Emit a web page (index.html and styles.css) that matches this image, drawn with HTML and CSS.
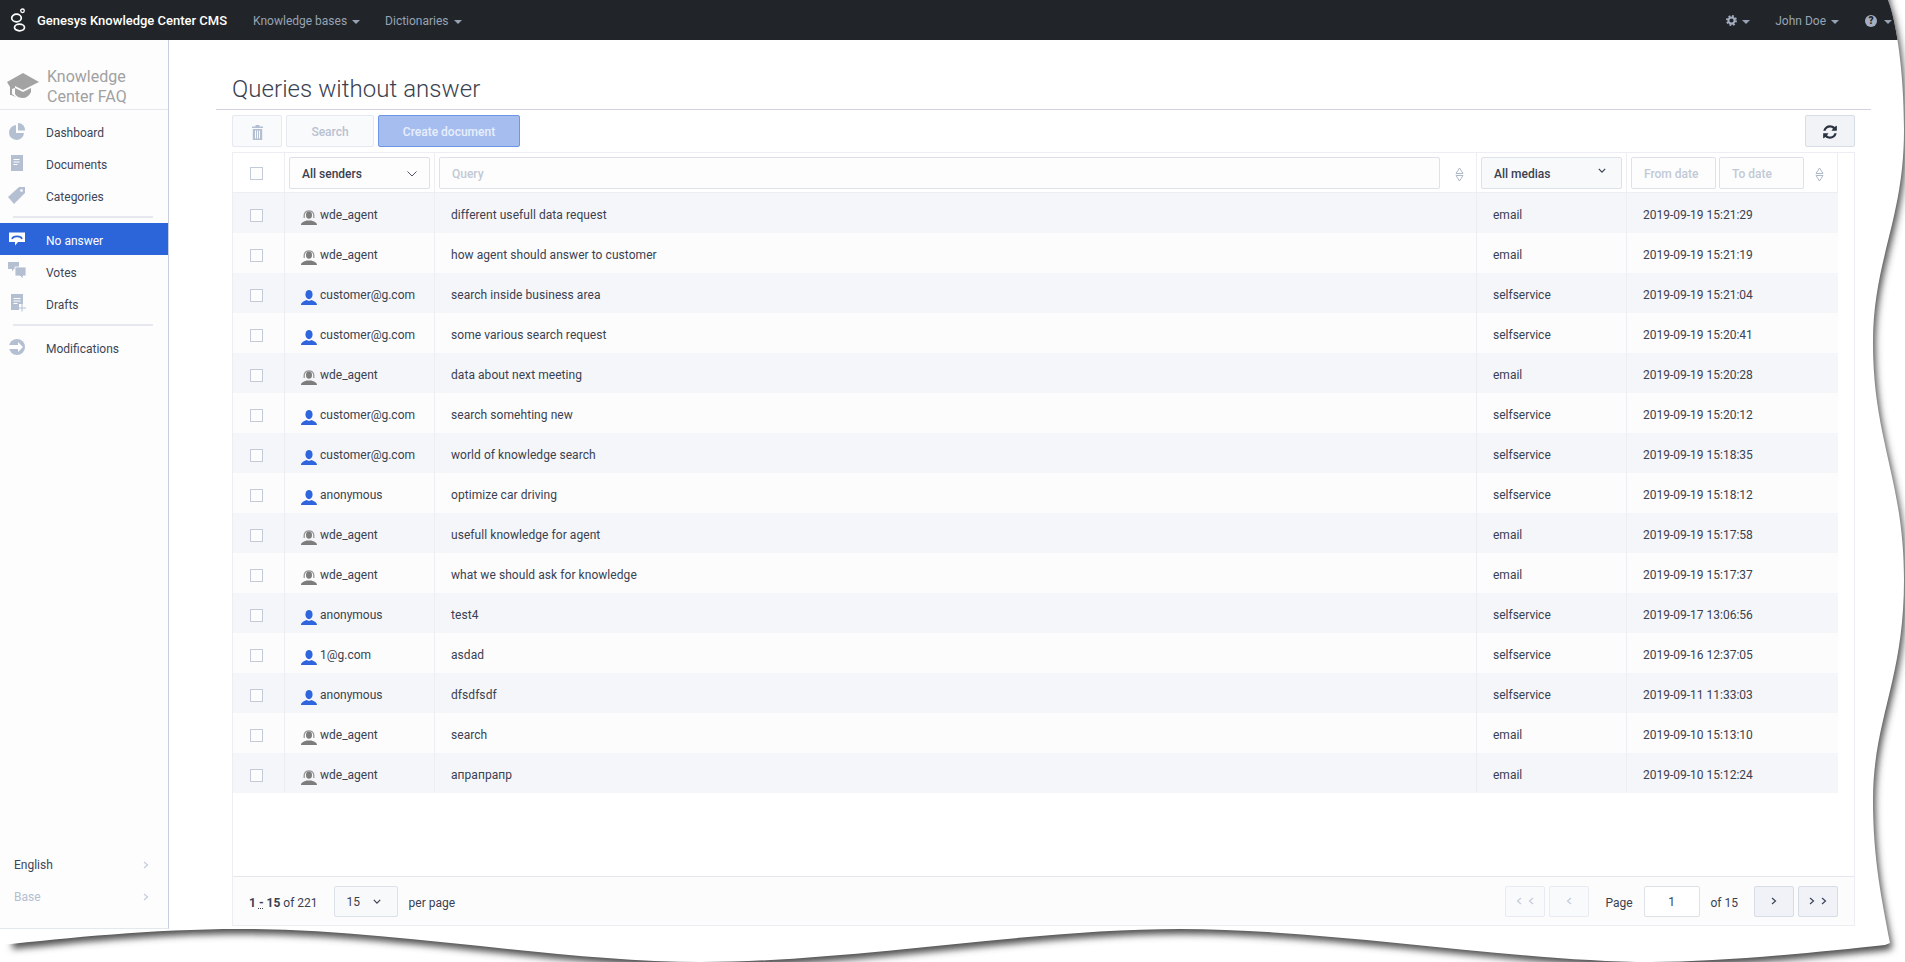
FILE: index.html
```html
<!DOCTYPE html>
<html lang="en">
<head>
  <meta charset="UTF-8">
  <title>Genesys Knowledge Center CMS</title>
  <link rel="stylesheet" href="styles.css">
</head>
<body>
  <!-- shared icons -->
  <svg class="sprite" width="0" height="0">
    <defs>
      <symbol id="i-customer" viewBox="0 0 16 15">
        <ellipse cx="8" cy="4.6" rx="3.6" ry="4.6" fill="#2f65dd"/>
        <path d="M0 15c0-2.600 2.500-3.600 5.500-5l2.500 1 2.500-1c3 1.400 5.500 2.400 5.500 5z" fill="#2f65dd"/>
      </symbol>
      <symbol id="i-agent" viewBox="0 0 16 15">
        <ellipse cx="8" cy="5" rx="3" ry="3.800" fill="#7d7d7d"/>
        <path d="M3.200 8V5.500C3.200 2.600 5.300 .8 8 .8s4.800 1.800 4.800 4.700V8" fill="none" stroke="#9a9a9a" stroke-width="1.300"/>
        <path d="M0 15c0-2.400 2.800-3.200 5.500-4.400h5c2.700 1.200 5.500 2 5.500 4.400z" fill="#7d7d7d"/>
      </symbol>
      <symbol id="i-sort" viewBox="0 0 9 15">
        <path d="M4.500 1L8 6.500H1zM1 8.500h7L4.500 14z" fill="none" stroke="#aeb7c6"/>
      </symbol>
      <symbol id="i-chev-right" viewBox="0 0 6 8">
        <path d="M1 1l3.500 3L1 7" fill="none" stroke="currentColor" stroke-width="1.200"/>
      </symbol>
      <symbol id="i-chev-left" viewBox="0 0 6 8">
        <path d="M5 1L1.500 4 5 7" fill="none" stroke="currentColor" stroke-width="1.200"/>
      </symbol>
      <symbol id="i-chev-down" viewBox="0 0 10 6">
        <path d="M1 1l4 4 4-4" fill="none" stroke="currentColor" stroke-width="1.500"/>
      </symbol>
      <symbol id="i-chev-thin" viewBox="0 0 10 6">
        <path d="M.5 .5L5 5l4.500-4.500" fill="none" stroke="currentColor" stroke-width=".9"/>
      </symbol>
      <path id="page-shape" d="M0 -20H1885L1888 0C1896 20 1904 70 1904 130C1904 220 1873 260 1873 343C1873 440 1904 480 1904 580C1904 680 1873 720 1873 800C1873 860 1882 900 1890 943L1885 945C1820 952 1720 962 1651 962C1520 962 1330 929 1180 929C1030 929 850 962 701 962C560 962 390 929 240 929C150 929 70 938 0 945Z"/>
      <path id="shadow-shape" d="M10 -20H1885L1888 0C1896 20 1904 70 1904 130C1904 220 1873 260 1873 343C1873 440 1904 480 1904 580C1904 680 1873 720 1873 800C1873 860 1882 900 1890 943L1885 945C1820 952 1720 962 1651 962C1520 962 1330 929 1180 929C1030 929 850 962 701 962C560 962 390 929 240 929C150 929 70 938 10 944Z"/>
      <filter id="tear-blur" filterUnits="userSpaceOnUse" x="0" y="-40" width="1960" height="1060">
        <feGaussianBlur stdDeviation="3.600"/>
      </filter>
      <mask id="outside-page" maskUnits="userSpaceOnUse" x="0" y="0" width="1905" height="962">
        <rect width="1905" height="962" fill="#fff"/>
        <use href="#page-shape" fill="#000"/>
      </mask>
    </defs>
  </svg>

  <header class="navbar">
    <svg class="logo" width="17" height="25" viewBox="0 0 17 25">
      <circle cx="12.500" cy="2.800" r="1.800" fill="none" stroke="#fff" stroke-width="1.300"/>
      <ellipse cx="6.500" cy="10" rx="4.800" ry="3.800" fill="none" stroke="#fff" stroke-width="1.700"/>
      <ellipse cx="9.500" cy="19.500" rx="5" ry="3.300" fill="none" stroke="#fff" stroke-width="1.700"/>
    </svg>
    <span class="brand">Genesys Knowledge Center CMS</span>
    <a class="nav-link">Knowledge bases<i class="caret"></i></a>
    <a class="nav-link">Dictionaries<i class="caret"></i></a>
    <div class="nav-right">
      <a class="nav-link">
        <svg class="gear" width="11" height="11" viewBox="0 0 12 12">
          <circle cx="6" cy="6" r="3.400" fill="none" stroke="#a3afc0" stroke-width="2.200"/>
          <circle cx="6" cy="6" r="5" fill="none" stroke="#a3afc0" stroke-width="2" stroke-dasharray="2 1.930"/>
        </svg><i class="caret"></i>
      </a>
      <a class="nav-link user-link">John Doe<i class="caret"></i></a>
      <a class="nav-link help-link"><span class="help">?</span><i class="caret"></i></a>
    </div>
  </header>

  <div class="app">
    <aside class="sidebar">
      <div class="kb-title">
        <svg class="kb-icon" width="32" height="25" viewBox="0 0 32 25" fill="#a3a3a3">
          <path d="M16 0l16 9-16 8-8-4v2l-3 1v6H3v-8L0 9z"/>
          <path d="M8 15l8 4 8-4v4c-2 4-5 6-8 6s-6-1-8-4z"/>
          <path d="M5 14l-1 8 5 2-4-3z"/>
        </svg>
        <span>Knowledge<br>Center FAQ</span>
      </div>

      <nav class="menu">
        <a class="menu-item">
          <svg class="menu-icon" viewBox="0 0 18 18" fill="#b4c0d1">
            <path d="M8 3a7.500 7.500 0 1 0 8 8H8z"/><path d="M10 1a7 7 0 0 1 7 7.500h-7z"/>
          </svg>Dashboard</a>
        <a class="menu-item">
          <svg class="menu-icon" viewBox="0 0 18 18">
            <rect x="3" y="1" width="12" height="16" fill="#b4c0d1"/>
            <path d="M5.500 5.500h6M5.500 8h6M5.500 10.500h4" stroke="#fff"/>
          </svg>Documents</a>
        <a class="menu-item">
          <svg class="menu-icon" viewBox="0 0 18 18">
            <path d="M0 11L11 1h6v6L6 18z" fill="#b4c0d1"/>
            <circle cx="13.500" cy="4.500" r="1.300" fill="#fff"/>
          </svg>Categories</a>
        <hr class="menu-sep first">
        <a class="menu-item active">
          <svg class="menu-icon" viewBox="0 0 18 18">
            <path d="M1 2.500h16v9.500h-7l-3 3.500V12H1z" fill="#fff"/>
            <path d="M4 9c1-3.500 9-3.500 10 0" fill="none" stroke="#2c65d9" stroke-width="1.600"/>
          </svg>No answer</a>
        <a class="menu-item">
          <svg class="menu-icon" viewBox="0 0 18 18" fill="#b4c0d1">
            <path d="M0 0h11v7H6l-2 2.500V7H0z"/><path d="M7 5h11v9h-3v3l-3-3H7z" stroke="#fff" stroke-width=".8"/>
          </svg>Votes</a>
        <a class="menu-item">
          <svg class="menu-icon" viewBox="0 0 18 18">
            <path d="M3 0h12v10h-4v6H3z" fill="#b4c0d1"/>
            <path d="M5.500 4.500h7M5.500 7h7M5.500 9.500h4" stroke="#fff"/>
            <path d="M14 10v7.500M10.500 14h7.500" stroke="#b4c0d1"/>
          </svg>Drafts</a>
        <hr class="menu-sep">
        <a class="menu-item">
          <svg class="menu-icon" viewBox="0 0 18 18">
            <circle cx="9" cy="9" r="8" fill="#b4c0d1"/>
            <path d="M1 7h9V4l5 5-5 5v-3H1z" fill="#fff"/>
          </svg>Modifications</a>
      </nav>

      <div class="side-options">
        <a class="side-option">English<svg class="side-chev"><use href="#i-chev-right"/></svg></a>
        <a class="side-option muted">Base<svg class="side-chev"><use href="#i-chev-right"/></svg></a>
      </div>
    </aside>

    <main class="content">
      <h1 class="page-title">Queries without answer</h1>

      <div class="toolbar">
        <button class="btn btn-trash">
          <svg width="11" height="15" viewBox="0 0 11 15" fill="#b4c0d1">
            <path d="M3.500 0h4v1.500H11V3H0V1.500h3.500z"/>
            <path d="M.8 4h9.400v11H.8zM3 5.500V13.500h1V5.500zM5 5.500V13.500h1V5.500zM7 5.500V13.500h1V5.500z" fill-rule="evenodd"/>
          </svg>
        </button>
        <button class="btn btn-search">Search</button>
        <button class="btn btn-create">Create document</button>
        <button class="btn btn-refresh">
          <svg width="16" height="16" viewBox="0 0 1792 1792" fill="#2b3340">
            <path d="M1639 1056q0 5-1 7-64 268-268 434.5t-478 166.5q-146 0-282.5-55t-243.5-157l-129 129q-19 19-45 19t-45-19-19-45v-448q0-26 19-45t45-19h448q26 0 45 19t19 45-19 45l-137 137q71 66 161 102t187 36q134 0 250-65t186-179q11-17 53-117 8-23 30-23h192q13 0 22.5 9.5t9.5 22.5zm25-800v448q0 26-19 45t-45 19h-448q-26 0-45-19t-19-45 19-45l138-138q-148-137-349-137-134 0-250 65t-186 179q-11 17-53 117-8 23-30 23h-199q-13 0-22.5-9.5t-9.5-22.5v-7q65-268 270-434.5t480-166.5q146 0 284 55.5t245 156.5l130-129q19-19 45-19t45 19 19 45z"/>
          </svg>
        </button>
      </div>

      <section class="panel">
        <table class="grid">
          <colgroup>
            <col class="col-check"><col class="col-sender"><col class="col-query"><col class="col-media"><col class="col-date">
          </colgroup>
          <thead>
            <tr>
              <th><span class="checkbox"></span></th>
              <th>
                <div class="select select-sender">All senders<svg class="arrow-thin"><use href="#i-chev-thin"/></svg></div>
              </th>
              <th>
                <div class="filter">
                  <input class="field field-query" placeholder="Query">
                  <svg class="sort"><use href="#i-sort"/></svg>
                </div>
              </th>
              <th>
                <div class="select select-media">All medias<svg class="arrow-bold"><use href="#i-chev-down"/></svg></div>
              </th>
              <th>
                <div class="filter filter-dates">
                  <input class="field field-date" placeholder="From date">
                  <input class="field field-date" placeholder="To date">
                  <svg class="sort"><use href="#i-sort"/></svg>
                </div>
              </th>
            </tr>
          </thead>
          <tbody>
            <tr><td><span class="checkbox"></span></td><td><div class="sender"><svg class="who"><use href="#i-agent"/></svg>wde_agent</div></td><td class="query">different usefull data request</td><td>email</td><td>2019-09-19 15:21:29</td></tr>
            <tr><td><span class="checkbox"></span></td><td><div class="sender"><svg class="who"><use href="#i-agent"/></svg>wde_agent</div></td><td class="query">how agent should answer to customer</td><td>email</td><td>2019-09-19 15:21:19</td></tr>
            <tr><td><span class="checkbox"></span></td><td><div class="sender"><svg class="who"><use href="#i-customer"/></svg>customer@g.com</div></td><td class="query">search inside business area</td><td>selfservice</td><td>2019-09-19 15:21:04</td></tr>
            <tr><td><span class="checkbox"></span></td><td><div class="sender"><svg class="who"><use href="#i-customer"/></svg>customer@g.com</div></td><td class="query">some various search request</td><td>selfservice</td><td>2019-09-19 15:20:41</td></tr>
            <tr><td><span class="checkbox"></span></td><td><div class="sender"><svg class="who"><use href="#i-agent"/></svg>wde_agent</div></td><td class="query">data about next meeting</td><td>email</td><td>2019-09-19 15:20:28</td></tr>
            <tr><td><span class="checkbox"></span></td><td><div class="sender"><svg class="who"><use href="#i-customer"/></svg>customer@g.com</div></td><td class="query">search somehting new</td><td>selfservice</td><td>2019-09-19 15:20:12</td></tr>
            <tr><td><span class="checkbox"></span></td><td><div class="sender"><svg class="who"><use href="#i-customer"/></svg>customer@g.com</div></td><td class="query">world of knowledge search</td><td>selfservice</td><td>2019-09-19 15:18:35</td></tr>
            <tr><td><span class="checkbox"></span></td><td><div class="sender"><svg class="who"><use href="#i-customer"/></svg>anonymous</div></td><td class="query">optimize car driving</td><td>selfservice</td><td>2019-09-19 15:18:12</td></tr>
            <tr><td><span class="checkbox"></span></td><td><div class="sender"><svg class="who"><use href="#i-agent"/></svg>wde_agent</div></td><td class="query">usefull knowledge for agent</td><td>email</td><td>2019-09-19 15:17:58</td></tr>
            <tr><td><span class="checkbox"></span></td><td><div class="sender"><svg class="who"><use href="#i-agent"/></svg>wde_agent</div></td><td class="query">what we should ask for knowledge</td><td>email</td><td>2019-09-19 15:17:37</td></tr>
            <tr><td><span class="checkbox"></span></td><td><div class="sender"><svg class="who"><use href="#i-customer"/></svg>anonymous</div></td><td class="query">test4</td><td>selfservice</td><td>2019-09-17 13:06:56</td></tr>
            <tr><td><span class="checkbox"></span></td><td><div class="sender"><svg class="who"><use href="#i-customer"/></svg>1@g.com</div></td><td class="query">asdad</td><td>selfservice</td><td>2019-09-16 12:37:05</td></tr>
            <tr><td><span class="checkbox"></span></td><td><div class="sender"><svg class="who"><use href="#i-customer"/></svg>anonymous</div></td><td class="query">dfsdfsdf</td><td>selfservice</td><td>2019-09-11 11:33:03</td></tr>
            <tr><td><span class="checkbox"></span></td><td><div class="sender"><svg class="who"><use href="#i-agent"/></svg>wde_agent</div></td><td class="query">search</td><td>email</td><td>2019-09-10 15:13:10</td></tr>
            <tr><td><span class="checkbox"></span></td><td><div class="sender"><svg class="who"><use href="#i-agent"/></svg>wde_agent</div></td><td class="query">апрапрапр</td><td>email</td><td>2019-09-10 15:12:24</td></tr>
          </tbody>
        </table>

        <footer class="pager">
          <span class="range"><b>1 <span class="dash">-</span> 15</b> of 221</span>
          <div class="select select-size">15<svg class="arrow-small"><use href="#i-chev-down"/></svg></div>
          <span class="per-page">per page</span>
          <div class="pager-right">
            <button class="page-btn" disabled><svg class="pg-chev"><use href="#i-chev-left"/></svg><svg class="pg-chev"><use href="#i-chev-left"/></svg></button>
            <button class="page-btn" disabled><svg class="pg-chev"><use href="#i-chev-left"/></svg></button>
            <span class="page-label">Page</span>
            <input class="page-input" value="1">
            <span class="page-total">of 15</span>
            <button class="page-btn"><svg class="pg-chev"><use href="#i-chev-right"/></svg></button>
            <button class="page-btn"><svg class="pg-chev"><use href="#i-chev-right"/></svg><svg class="pg-chev"><use href="#i-chev-right"/></svg></button>
          </div>
        </footer>
      </section>
    </main>
  </div>

  <!-- torn paper edge of the screenshot -->
  <svg class="tear" width="1905" height="962" viewBox="0 0 1905 962">
    <rect width="1905" height="962" fill="#fff" mask="url(#outside-page)"/>
    <g mask="url(#outside-page)">
      <use href="#shadow-shape" fill="#4f4f4f" transform="translate(2.5 5)" filter="url(#tear-blur)"/>
    </g>
  </svg>
</body>
</html>
```

FILE: styles.css
```css
* {
  box-sizing: border-box;
}

html, body {
  margin: 0;
  height: 962px;
  overflow: hidden;
}

body {
  position: relative;
  font-family: Roboto, "Liberation Sans", sans-serif;
  font-size: 12px;
  color: #3a4150;
  background-color: #fff;
}

.sprite {
  position: absolute;
}

.tear {
  position: absolute;
  top: 0;
  left: 0;
  pointer-events: none;
}

/* top bar */
.navbar {
  display: flex;
  align-items: center;
  height: 40px;
  padding-left: 10px;
  background-color: #212529;
}

.logo {
  margin-right: 10px;
}

.brand {
  font-size: 13px;
  font-weight: 500;
  color: #fff;
  margin-right: 26px;
}

.nav-link {
  display: flex;
  align-items: center;
  padding-top: 1px;
  font-size: 12px;
  color: #97a3b4;
  margin-right: 25px;
}

.caret {
  display: inline-block;
  margin-left: 5px;
  margin-top: 2px;
  border-top: 4px solid #97a3b4;
  border-left: 4px solid transparent;
  border-right: 4px solid transparent;
}

.nav-right {
  display: flex;
  align-items: center;
  margin-left: auto;
}

.nav-right .user-link {
  margin-right: 26px;
}

.nav-right .help-link {
  margin-right: 13px;
}

.help-link .caret {
  margin-left: 7px;
}

.help {
  width: 12px;
  height: 12px;
  border-radius: 50%;
  background-color: #a3afc0;
  color: #212529;
  font-size: 10px;
  font-weight: 900;
  line-height: 12px;
  text-align: center;
}

/* layout */
.app {
  display: flex;
  height: 889px;
}

.sidebar {
  display: flex;
  flex-direction: column;
  flex: none;
  width: 169px;
  border-right: 1px solid #c6cfdf;
  border-bottom: 1px solid #e3e7ee;
  background-color: #fdfdfe;
}

.kb-title {
  display: flex;
  height: 70px;
  padding: 27px 0 0 7px;
  border-bottom: 1px solid #e3e7ee;
  font-size: 16px;
  line-height: 20px;
  color: #a1a1a1;
}

.kb-icon {
  margin: 6px 8px 0 0;
}

.menu {
  margin-top: 6px;
}

.menu-item {
  display: flex;
  align-items: center;
  height: 32px;
  padding-top: 1px;
  color: #3d4656;
}

.menu-icon {
  flex: none;
  width: 18px;
  height: 18px;
  margin: -3px 20px 0 8px;
}

.menu-item.active {
  margin-bottom: 1px;
  background-color: #2c65d9;
  color: #fff;
  padding-top: 3px;
}

.menu-sep {
  height: 2px;
  margin: 4px 15px 6px 13px;
  border: 0;
  background-color: #e5e8ef;
}

.menu-sep.first {
  margin-bottom: 5px;
}

.side-options {
  margin-top: auto;
  padding-bottom: 15px;
}

.side-option {
  display: flex;
  align-items: center;
  justify-content: space-between;
  height: 32px;
  padding: 0 19px 0 14px;
  color: #3d4656;
}

.side-option.muted {
  color: #b3bfd0;
}

.side-chev {
  width: 6px;
  height: 8px;
  color: #c3ccda;
}

/* main area */
.content {
  display: flex;
  flex-direction: column;
  flex: 1;
  min-width: 0;
  padding: 0 34px 3px 47px;
}

.page-title {
  margin: 0;
  height: 70px;
  padding: 34px 0 0 16px;
  border-bottom: 1px solid #cfd4e0;
  font-size: 24px;
  font-weight: 300;
  line-height: 30px;
  letter-spacing: .05px;
  color: #3a4150;
}

.toolbar {
  display: flex;
  gap: 4px;
  margin: 5px 16px 5px;
}

.btn {
  height: 32px;
  padding: 2px 0 0;
  border: 1px solid #e6e9f0;
  border-radius: 2px;
  background-color: #f9fafc;
  font-family: inherit;
  font-size: 12px;
  font-weight: 500;
  color: #b8c2d1;
}

.btn-trash {
  width: 50px;
  display: flex;
  align-items: center;
  justify-content: center;
}

.btn-search {
  width: 88px;
}

.btn-create {
  width: 142px;
  border-color: #6d96e6;
  background-color: #a6beef;
  color: #e8eefb;
}

.btn-refresh {
  display: flex;
  align-items: center;
  justify-content: center;
  width: 50px;
  margin-left: auto;
  border-color: #d7dde7;
  background-color: #f1f3f7;
}

.panel {
  display: flex;
  flex-direction: column;
  flex: 1;
  margin: 0 16px;
  border: 1px solid #eceef3;
}

/* table */
.grid {
  width: 1605px;
  table-layout: fixed;
  border-collapse: separate;
  border-spacing: 0;
}

.col-check { width: 52px; }
.col-sender { width: 150px; }
.col-query { width: 1042px; }
.col-media { width: 150px; }
.col-date { width: 211px; }

.grid th {
  height: 40px;
  padding: 0 4px;
  border-right: 1px solid #eceef3;
  border-bottom: 1px solid #eceef3;
  font-weight: 500;
  text-align: left;
}

.grid th:first-child {
  padding: 2px 0 0 17px;
}

.grid td:first-child {
  padding: 5px 0 0 17px;
}

.grid td {
  height: 40px;
  padding: 4px 16px 0;
  border-right: 1px solid #eceef3;
  background-color: #fcfcfd;
  line-height: 36px;
  white-space: nowrap;
}

.grid tbody tr:nth-child(odd) td {
  background-color: #f5f6fa;
}

.grid td:last-child {
  border-right: 0;
}

.grid td.query {
  letter-spacing: .06px;
}

.checkbox {
  display: block;
  width: 13px;
  height: 13px;
  border: 1px solid #c3cbd9;
  background-color: #fdfdfe;
}

.sender {
  display: flex;
  align-items: center;
  gap: 3px;
}

.who {
  flex: none;
  width: 16px;
  height: 15px;
  margin-top: 4px;
}

.select {
  display: flex;
  align-items: center;
  justify-content: space-between;
  height: 32px;
  padding: 2px 12px 0;
  border: 1px solid #dde1ea;
  border-radius: 2px;
  background-color: #fdfdfe;
  color: #3a4150;
}

.select-media {
  background-color: #f8f9fb;
}

.arrow-thin {
  width: 10px;
  height: 6px;
  color: #3a4150;
}

.arrow-bold {
  width: 8px;
  height: 5px;
  margin-top: -6px;
  margin-right: 3px;
  color: #3a4150;
}

.filter {
  display: flex;
  align-items: center;
  justify-content: space-between;
  gap: 3px;
}

.filter-dates {
  justify-content: flex-start;
}

.field {
  height: 32px;
  padding: 2px 12px 0;
  border: 1px solid #dde1ea;
  border-radius: 2px;
  background-color: #fdfdfe;
  font-family: inherit;
  font-size: 12px;
  font-weight: 500;
  outline: none;
}

.field::placeholder {
  color: #c2c9d5;
}

.field-query {
  width: 1001px;
}

.field-date {
  width: 85px;
}

.sort {
  flex: none;
  width: 9px;
  height: 15px;
  margin: 3px 8px 0 0;
}

.filter-dates .sort {
  margin: 3px 0 0 8px;
}

/* pagination */
.pager {
  display: flex;
  align-items: center;
  height: 49px;
  margin-top: auto;
  padding: 0 16px 0 16px;
  border-top: 1px solid #e4e7ee;
  background-color: #fcfcfd;
}

.range {
  padding-top: 3px;
}

.range b {
  font-weight: 700;
}

.dash {
  text-decoration: underline dotted;
}

.select-size {
  width: 64px;
  height: 31px;
  margin-left: 16px;
  padding: 2px 16px 0 12px;
  background-color: #f8f9fb;
}

.arrow-small {
  width: 8px;
  height: 5px;
  margin-top: -1px;
}

.per-page {
  margin-left: 11px;
  padding-top: 3px;
}

.pager-right {
  display: flex;
  align-items: center;
  margin-left: auto;
}

.page-btn {
  display: flex;
  align-items: center;
  justify-content: center;
  gap: 6px;
  width: 40px;
  height: 31px;
  margin-left: 4px;
  padding: 0;
  border: 1px solid #d7dde7;
  border-radius: 2px;
  background-color: #f0f2f7;
  color: #3d4656;
}

.page-btn:disabled {
  border-color: #e8ebf1;
  background-color: #f9fafc;
  color: #c3ccda;
}

.pg-chev {
  width: 6px;
  height: 8px;
}

.page-label {
  margin-left: 16px;
  padding-top: 3px;
}

.page-input {
  width: 56px;
  height: 31px;
  margin-left: 11px;
  padding-top: 2px;
  border: 1px solid #dde1ea;
  border-radius: 2px;
  background-color: #fff;
  font-family: inherit;
  font-size: 12px;
  color: #3a4150;
  text-align: center;
  outline: none;
}

.page-total {
  margin: 0 12px 0 11px;
  padding-top: 3px;
}
```
